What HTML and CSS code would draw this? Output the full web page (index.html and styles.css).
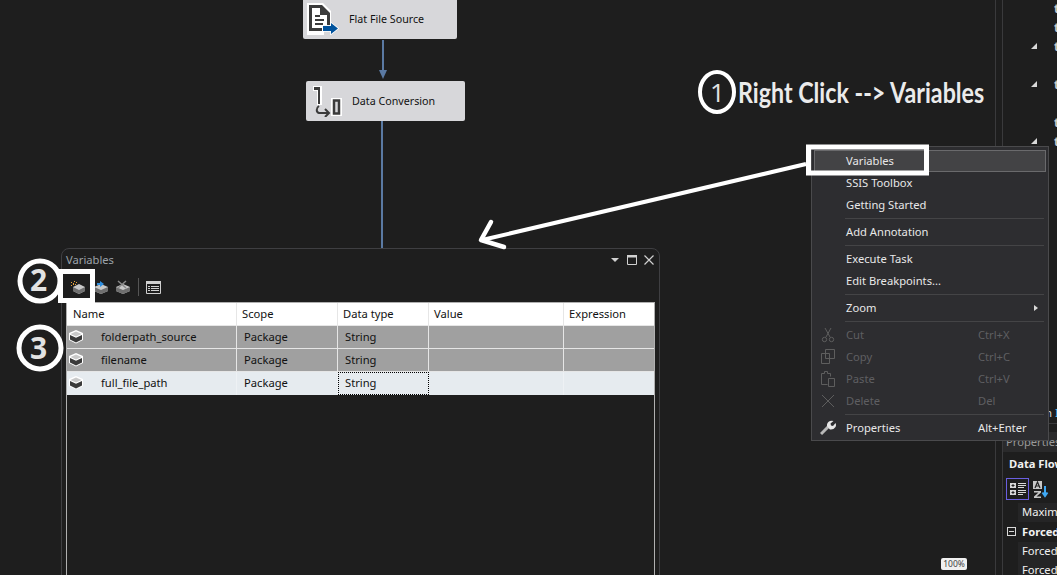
FILE: index.html
```html
<!DOCTYPE html>
<html lang="en">
<head>
  <meta charset="UTF-8">
  <title>Variables</title>
  <link rel="stylesheet" href="styles.css">
</head>
<body>
  <main class="designer">
    <!-- data flow nodes -->
    <div class="node node-source">
      <svg class="node-icon" width="34" height="32" viewBox="0 0 34 32">
        <path d="M1 0h16l8 8v14h-7v10H1z" fill="#fff"/>
        <path d="M3 2h13l8 8v12h-3V12h-7V5H6v20h10v3H3z" fill="#3b3b3b"/>
        <path d="M9 12h5v2H9zM9 16h9v2H9zM9 20h8v2H9z" fill="#3b3b3b"/>
        <path d="M17 23h8v-3l7 5.500-7 5.500v-3h-8z" fill="#00529c" stroke="#fff" stroke-width="1.500" paint-order="stroke"/>
      </svg>
      <span class="node-label">Flat File Source</span>
    </div>
    <div class="link link-first"></div>
    <div class="node node-convert">
      <svg class="node-icon" width="30" height="32" viewBox="0 0 30 32">
        <path d="M1 1h9v19H5V6H1z" fill="#fff"/>
        <path d="M2 2h6v17H6V5H2z" fill="#3b3b3b"/>
        <path d="M19 13h11v18H19z" fill="#fff"/>
        <path d="M22 15.500h5v13h-5z" fill="#d7d7da" stroke="#3b3b3b" stroke-width="2.500"/>
        <path d="M7 21c-3 2-3 6 0 7h9M13 24l4 4-4 4" fill="none" stroke="#3b3b3b" stroke-width="2"/>
      </svg>
      <span class="node-label">Data Conversion</span>
    </div>
    <div class="link link-second"></div>

    <!-- variables window -->
    <section class="tool-window">
      <header class="window-title">
        <span>Variables</span>
        <div class="window-buttons">
          <svg width="10" height="6" viewBox="0 0 10 6"><path d="M1 1h8l-4 4z" fill="#d0d0d0"/></svg>
          <svg width="10" height="10" viewBox="0 0 10 10"><path d="M.5 .5h9v9h-9z" fill="none" stroke="#d0d0d0"/><path d="M0 0h10v2.500h-10z" fill="#d0d0d0"/></svg>
          <svg width="10" height="10" viewBox="0 0 10 10"><path d="M.5 .5l9 9M9.500 .5l-9 9" stroke="#d0d0d0" stroke-width="1.200"/></svg>
        </div>
      </header>
      <div class="window-toolbar">
        <svg class="tool tool-add" width="16" height="14" viewBox="0 0 16 14">
          <path d="M3 7l6-3 6 3v4l-6 3-6-3z" fill="#c8c8c8"/><path d="M3 7l6 3 6-3v4l-6 3-6-3z" fill="#6f6f6f"/>
          <path d="M1 2h1v1h-1zM4 1h1v1h-1zM3 3h1v2h-1zM6 2h1v1h-1zM1 5h1v1h-1zM5 4h1v1h-1z" fill="#e8a33a"/>
        </svg>
        <svg class="tool tool-move" width="16" height="14" viewBox="0 0 16 14">
          <path d="M1 7l7-3 7 3v4l-7 3-7-3z" fill="#c8c8c8"/><path d="M1 7l7 3 7-3v4l-7 3-7-3z" fill="#6f6f6f"/>
          <path d="M4 3h3v-2l4 3-4 3v-2h-3z" fill="#2f8fe0"/>
        </svg>
        <svg class="tool tool-delete" width="16" height="14" viewBox="0 0 16 14">
          <path d="M1 7l7-3 7 3v4l-7 3-7-3z" fill="#c8c8c8"/><path d="M1 7l7 3 7-3v4l-7 3-7-3z" fill="#6f6f6f"/>
          <path d="M3 1l8 7M11 1l-8 7" stroke="#8a8a8a" stroke-width="1.500"/>
        </svg>
        <span class="tool-sep"></span>
        <svg class="tool tool-grid" width="15" height="13" viewBox="0 0 15 13">
          <path d="M.5 .5h14v12h-14z" fill="none" stroke="#d0d0d0"/><path d="M0 0h15v3h-15z" fill="#d0d0d0"/>
          <path d="M2 5h2v1h-2zM5 5h8v1h-8zM2 7h2v1h-2zM5 7h8v1h-8zM2 9h2v1h-2zM5 9h8v1h-8z" fill="#d0d0d0"/>
        </svg>
      </div>
      <div class="var-grid">
        <div class="var-row var-head">
          <div class="cell cell-name">Name</div>
          <div class="cell cell-scope">Scope</div>
          <div class="cell cell-type">Data type</div>
          <div class="cell cell-value">Value</div>
          <div class="cell cell-expr">Expression</div>
        </div>
        <div class="var-row var-selected">
          <div class="cell cell-name">
            <svg class="cube" width="16" height="15" viewBox="0 0 16 15"><use href="#cube-shape"/></svg>
            <span>folderpath_source</span>
          </div>
          <div class="cell cell-scope">Package</div>
          <div class="cell cell-type">String</div>
          <div class="cell cell-value"></div>
          <div class="cell cell-expr"></div>
        </div>
        <div class="var-row var-selected">
          <div class="cell cell-name">
            <svg class="cube" width="16" height="15" viewBox="0 0 16 15"><use href="#cube-shape"/></svg>
            <span>filename</span>
          </div>
          <div class="cell cell-scope">Package</div>
          <div class="cell cell-type">String</div>
          <div class="cell cell-value"></div>
          <div class="cell cell-expr"></div>
        </div>
        <div class="var-row var-current">
          <div class="cell cell-name">
            <svg class="cube" width="16" height="15" viewBox="0 0 16 15"><use href="#cube-shape"/></svg>
            <span>full_file_path</span>
          </div>
          <div class="cell cell-scope">Package</div>
          <div class="cell cell-type cell-focus">String</div>
          <div class="cell cell-value"></div>
          <div class="cell cell-expr"></div>
        </div>
      </div>
    </section>

    <div class="zoom-tag">100%</div>
  </main>

  <!-- right docks -->
  <aside class="dock">
    <ul class="tree">
      <li class="tree-row"><span class="tree-text">t</span></li>
      <li class="tree-row"><span class="tree-text">t</span></li>
      <li class="tree-row"><i class="tree-arrow"></i><span class="tree-text">t</span></li>
      <li class="tree-row"></li>
      <li class="tree-row"><i class="tree-arrow"></i><span class="tree-text">t</span></li>
      <li class="tree-row"></li>
      <li class="tree-row"><span class="tree-text">t</span></li>
      <li class="tree-row"><i class="tree-arrow"></i><span class="tree-text">t</span></li>
    </ul>
    <div class="dock-status">n <span class="dock-link">I</span></div>
    <div class="props">
      <div class="props-tab">Properties</div>
      <div class="props-object">Data Flow Task</div>
      <div class="props-toolbar">
        <span class="props-btn">
          <svg width="18" height="16" viewBox="0 0 18 16">
            <path d="M1 2h6v5h-6zM1 9h6v5h-6z" fill="#d8d8d8"/>
            <path d="M2.500 4.500h3M4 3v3M2.500 11.500h3M4 10v3" stroke="#222"/>
            <path d="M9 2h8v1h-8zM9 4h8v1h-8zM9 6h6v1h-6zM9 9h8v1h-8zM9 11h8v1h-8zM9 13h5v1h-5z" fill="#d8d8d8"/>
          </svg>
        </span>
        <svg class="sort-icon" width="16" height="17" viewBox="0 0 16 17">
          <path d="M0 0h9v8h-9z" fill="#c8c8c8"/>
          <path d="M2 7l2.500-6 2.500 6M3 5h3" fill="none" stroke="#222" stroke-width="1.200"/>
          <path d="M1 10h7v1.500l-4.500 4h4.500v1.500h-7v-1.500l4.500-4h-4.500z" fill="#c8c8c8"/>
          <path d="M12 5v10M9.500 11.500l2.500 3.500 2.500-3.500" fill="none" stroke="#3fa9f5" stroke-width="2"/>
        </svg>
      </div>
      <div class="prop-row">Maximum</div>
      <div class="prop-group"><i class="prop-minus"></i><b>Forced</b></div>
      <div class="prop-row">Forced</div>
      <div class="prop-row">Forced</div>
    </div>
  </aside>

  <!-- context menu -->
  <nav class="menu">
    <div class="menu-item menu-hot">Variables</div>
    <div class="menu-item">SSIS Toolbox</div>
    <div class="menu-item">Getting Started</div>
    <div class="menu-sep"></div>
    <div class="menu-item">Add Annotation</div>
    <div class="menu-sep"></div>
    <div class="menu-item">Execute Task</div>
    <div class="menu-item">Edit Breakpoints...</div>
    <div class="menu-sep"></div>
    <div class="menu-item">Zoom<i class="menu-more"></i></div>
    <div class="menu-sep"></div>
    <div class="menu-item menu-off">
      <svg class="menu-icon" width="16" height="16" viewBox="0 0 16 16"><path d="M5 1l5 9M11 1l-5 9" stroke="#5e5e5e" fill="none"/><circle cx="4.500" cy="12.500" r="2.200" fill="none" stroke="#5e5e5e"/><circle cx="11.500" cy="12.500" r="2.200" fill="none" stroke="#5e5e5e"/></svg>
      Cut<span class="menu-key">Ctrl+X</span>
    </div>
    <div class="menu-item menu-off">
      <svg class="menu-icon" width="16" height="16" viewBox="0 0 16 16"><path d="M5.500 .5h9v9h-9zM1.500 4.500h8v10h-8z" fill="#2d2d30" stroke="#5e5e5e"/></svg>
      Copy<span class="menu-key">Ctrl+C</span>
    </div>
    <div class="menu-item menu-off">
      <svg class="menu-icon" width="16" height="16" viewBox="0 0 16 16"><path d="M1.500 2.500h3v-2h3v2h3v3M7.500 13.500h-6v-11M8.500 7.500h6v8h-6z" fill="none" stroke="#5e5e5e"/></svg>
      Paste<span class="menu-key">Ctrl+V</span>
    </div>
    <div class="menu-item menu-off">
      <svg class="menu-icon" width="16" height="16" viewBox="0 0 16 16"><path d="M2 2l12 12M14 2l-12 12" stroke="#5e5e5e"/></svg>
      Delete<span class="menu-key">Del</span>
    </div>
    <div class="menu-sep"></div>
    <div class="menu-item">
      <svg class="menu-icon" width="16" height="16" viewBox="0 0 16 16"><path d="M1 14l7-7" stroke="#b8b8b8" stroke-width="3"/><path d="M7 6.500q-.5-4 3-5.500 2-.5 3.500 0l-3 2.500.5 2 2 .5 2.500-3q1 2 0 4-2 3-5.500 2.500z" fill="#e6e6e6"/></svg>
      Properties<span class="menu-key">Alt+Enter</span>
    </div>
  </nav>

  <!-- hand drawn notes on top of the screenshot -->
  <svg class="notes" width="1057" height="575" viewBox="0 0 1057 575">
    <defs>
      <g id="cube-shape">
        <path d="M8 1l7 3v7l-7 3.500-7-3.500v-7z" fill="#fff"/>
        <path d="M8 2.500l5.500 2.500-5.500 2.500-5.500-2.500z" fill="#c9c9c9"/>
        <path d="M2 6l6 2.800 6-2.800v4.500l-6 3-6-3z" fill="#3a3a3a"/>
      </g>
    </defs>
    <ellipse cx="717" cy="92" rx="17" ry="20" fill="none" stroke="#fff" stroke-width="4"/>
    <circle cx="40" cy="281" r="20" fill="none" stroke="#fff" stroke-width="5"/>
    <circle cx="40" cy="348" r="21" fill="none" stroke="#fff" stroke-width="5"/>
    <path d="M60.500 271.500h32v29h-32z" fill="none" stroke="#fff" stroke-width="5"/>
    <path d="M808.500 147h118v26h-118z" fill="none" stroke="#fff" stroke-width="5"/>
    <path d="M806 164L482 240" stroke="#fff" stroke-width="4"/>
    <path d="M491 222L481 240L504 247" fill="none" stroke="#fff" stroke-width="4.500" stroke-linecap="round" stroke-linejoin="round"/>
  </svg>
  <div class="note-text">Right Click --&gt; Variables</div>
  <div class="note-num note-one">1</div>
  <div class="note-num note-two">2</div>
  <div class="note-num note-three">3</div>
</body>
</html>
```
FILE: styles.css
```css
* {
  box-sizing: border-box;
}
html, body {
  margin: 0;
  height: 575px;
  overflow: hidden;
}
body {
  display: flex;
  position: relative;
  background: #1e1e1e;
  font-family: "Noto Sans", "Liberation Sans", sans-serif;
  font-size: 11.2px;
  color: #f1f1f1;
}

/* designer canvas */
.designer {
  position: relative;
  flex: 1;
  overflow: hidden;
}
.node {
  position: absolute;
  display: flex;
  align-items: center;
  background: #d7d7da;
  border-radius: 2px;
  color: #111;
  font-size: 10.7px;
}
.node-source {
  left: 303px;
  top: -10px;
  width: 154px;
  height: 49px;
  padding-top: 9px;
}
.node-convert {
  left: 306px;
  top: 81px;
  width: 159px;
  height: 40px;
}
.node-icon {
  flex: none;
}
.node-source .node-icon {
  margin-left: 3px;
}
.node-convert .node-icon {
  margin-left: 6px;
}
.node-source .node-label {
  margin-left: 9px;
}
.node-convert .node-label {
  margin-left: 10px;
}
.link {
  position: absolute;
  width: 2px;
  background: #5b7aa3;
}
.link-first {
  left: 382px;
  top: 40px;
  height: 32px;
}
.link-first::after {
  content: "";
  position: absolute;
  left: -3px;
  top: 30px;
  border-left: 4px solid transparent;
  border-right: 4px solid transparent;
  border-top: 9px solid #5b7aa3;
}
.link-second {
  left: 381px;
  top: 121px;
  height: 127px;
}
.zoom-tag {
  position: absolute;
  left: 941px;
  top: 558px;
  width: 26px;
  height: 12px;
  background: #f0f0f0;
  border-radius: 2px;
  color: #444;
  font-size: 8.5px;
  line-height: 12px;
  text-align: center;
}

/* variables window */
.tool-window {
  position: absolute;
  left: 61px;
  top: 248px;
  width: 599px;
  height: 340px;
  border: 1px solid #3f3f42;
  border-radius: 8px;
  background: #1e1e1e;
  padding: 0 4px;
}
.window-title {
  display: flex;
  justify-content: space-between;
  align-items: center;
  height: 21px;
  color: #9ca3aa;
}
.window-buttons {
  display: flex;
  align-items: center;
  gap: 7px;
  margin-right: 1px;
}
.window-toolbar {
  display: flex;
  align-items: center;
  height: 24px;
  margin-top: 5px;
  padding-left: 3px;
}
.tool-add {
  margin-left: 1px;
}
.tool-move {
  margin-left: 7px;
}
.tool-delete {
  margin-left: 6px;
}
.tool-sep {
  width: 1px;
  height: 18px;
  margin: 0 7px 0 7px;
  background: #555;
}
.var-grid {
  height: 300px;
  margin-top: 3px;
  border: 1px solid #b0b0b0;
  border-bottom: 0;
  color: #111;
}
.var-row {
  display: grid;
  grid-template-columns: 170px 101px 91px 135px 1fr;
  height: 23px;
}
.var-head {
  background: #fff;
}
.var-selected {
  background: #a0a0a0;
}
.var-current {
  background: #e6ebef;
}
.cell {
  display: flex;
  align-items: center;
  padding: 0 0 2px 7px;
  border-right: 1px solid #e6e6e6;
  border-bottom: 1px solid #e6e6e6;
}
.var-head .cell {
  padding-left: 5px;
}
.var-head .cell-name {
  padding-left: 6px;
}
.var-current .cell {
  border-bottom: 0;
  border-right-color: #eef1f4;
}
.cell-expr {
  border-right: 0;
}
.var-selected .cell-name, .var-current .cell-name {
  padding-left: 1px;
}
.cell-name .cube {
  flex: none;
  margin-right: 17px;
}
.cell-focus {
  outline: 1px dotted #000;
  outline-offset: -1px;
}

/* right docks */
.dock {
  position: relative;
  flex: none;
  width: 62px;
  border-left: 1px solid #3a3a3c;
  overflow: hidden;
}
.dock::before {
  content: "";
  position: absolute;
  left: 6px;
  top: 0;
  bottom: 0;
  width: 1px;
  background: #3a3a3c;
}
.tree {
  list-style: none;
  margin: 0;
  padding: 0;
}
.tree-row {
  position: relative;
  height: 19px;
}
.tree-arrow {
  position: absolute;
  left: 35px;
  top: 5px;
  border-left: 6px solid transparent;
  border-bottom: 6px solid #d8d8d8;
}
.tree-text {
  position: absolute;
  left: 58px;
  top: 0;
  color: #ccc;
  font-size: 12px;
  font-weight: 700;
}
.dock-status {
  position: absolute;
  left: 46px;
  top: 405px;
  width: 16px;
  height: 19px;
  padding-left: 3px;
  border-bottom: 1px solid #3a3a3c;
  font-size: 11.5px;
  white-space: nowrap;
  color: #d8d8d8;
}
.dock-link {
  color: #4fc1e9;
}
.props {
  position: absolute;
  left: 6px;
  top: 432px;
  width: 56px;
  height: 143px;
  background: #1e1e1e;
  border-left: 1px solid #3a3a3c;
  overflow: hidden;
  white-space: nowrap;
}
.props-tab {
  height: 20px;
  padding-left: 3px;
  padding-top: 2px;
  color: #9a9a9a;
  background: #2a2a2b;
}
.props-object {
  height: 25px;
  padding-left: 6px;
  line-height: 24px;
  font-weight: 700;
}
.props-toolbar {
  display: flex;
  align-items: center;
  gap: 4px;
  height: 24px;
  padding-left: 3px;
}
.props-btn {
  display: flex;
  align-items: center;
  justify-content: center;
  width: 23px;
  height: 22px;
  border: 1px solid #6a5fe0;
}
.prop-row {
  height: 19px;
  margin-left: 15px;
  padding-left: 4px;
  background: #252526;
  line-height: 18px;
}
.props-toolbar + .prop-row {
  margin-top: 2px;
}
.prop-row + .prop-group + .prop-row {
  margin-top: 1px;
}
.prop-group {
  display: flex;
  align-items: center;
  gap: 6px;
  height: 19px;
  padding-left: 4px;
}
.prop-minus {
  position: relative;
  flex: none;
  width: 9px;
  height: 9px;
  border: 1px solid #d8d8d8;
}
.prop-minus::after {
  content: "";
  position: absolute;
  left: 1px;
  top: 3px;
  width: 5px;
  height: 1px;
  background: #d8d8d8;
}

/* context menu */
.menu {
  position: absolute;
  left: 811px;
  top: 146px;
  width: 238px;
  height: 295px;
  padding: 3px 2px;
  background: #2d2d30;
  border: 1px solid #4a4a4c;
}
.menu-item {
  position: relative;
  display: flex;
  align-items: center;
  height: 22px;
  padding: 0 0 2px 32px;
  color: #e8e8e8;
}
.menu-hot {
  background: #434345;
  border: 1px solid #6a6a6c;
  padding-left: 31px;
}
.menu-off {
  color: #5f5f62;
}
.menu-sep {
  height: 1px;
  margin: 2px 2px 2px 31px;
  background: #444446;
}
.menu-icon {
  position: absolute;
  left: 6px;
  top: 3px;
}
.menu-key {
  position: absolute;
  left: 164px;
}
.menu-more {
  position: absolute;
  right: 8px;
  top: 8px;
  border-left: 4px solid #d8d8d8;
  border-top: 3.500px solid transparent;
  border-bottom: 3.500px solid transparent;
}

/* annotations */
.notes {
  position: absolute;
  left: 0;
  top: 0;
  pointer-events: none;
}
.note-text {
  position: absolute;
  left: 738px;
  top: 75px;
  color: #ebebeb;
  font-family: "Lato", sans-serif;
  font-size: 28px;
  font-weight: 700;
  line-height: 34px;
  white-space: nowrap;
  transform: scaleX(.83);
  transform-origin: left center;
}
.note-num {
  position: absolute;
  font-family: "Open Sans", sans-serif;
  font-weight: 700;
  line-height: 1;
  color: #e2e2e2;
}
.note-one {
  left: 710px;
  top: 79px;
  font-size: 26px;
  font-weight: 400;
}
.note-two {
  left: 30px;
  top: 265px;
  font-size: 30px;
}
.note-three {
  left: 30px;
  top: 333px;
  font-size: 30px;
}
```
